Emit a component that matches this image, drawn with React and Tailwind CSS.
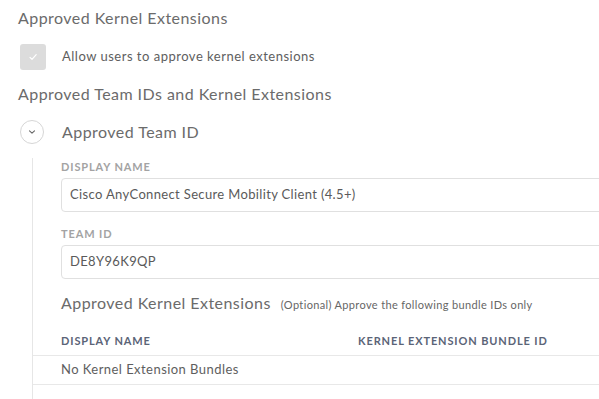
import React from 'react';

function Check() {
    return (
        <svg width="12" height="12" viewBox="0 0 12 12" fill="none">
            <path d="M3 6.3l2 2L9.2 3.6" stroke="#fff" strokeWidth="1.2" strokeLinecap="round" strokeLinejoin="round" />
        </svg>
    );
}

function Chevron() {
    return (
        <svg width="8" height="6" viewBox="0 0 8 6" fill="none">
            <path d="M1.5 1.8L4 4.2l2.5-2.4" stroke="#666" strokeWidth="1.1" strokeLinecap="round" strokeLinejoin="round" />
        </svg>
    );
}

function FieldLabel({ children }) {
    return (
        <div className="text-[11px] font-bold tracking-[0.08em] text-[#a3a3a3] leading-none">{children}</div>
    );
}

function TextField({ value }) {
    return (
        <div className="mt-[6px] -mr-[4px] flex h-[34px] items-center rounded-l-[4px] border border-[#e0e0e0] pl-[8px] text-[13px] tracking-[0.35px] text-[#5a5a5a]">
            {value}
        </div>
    );
}

export default function App() {
    return (
        <div
            className="h-[399px] w-[599px] overflow-hidden bg-white pl-[18px]"
            style={{ fontFamily: 'Lato, "Open Sans", sans-serif' }}
        >
            <h2 className="pt-[8px] text-[16px] leading-[20px] tracking-[0.45px] text-[#6b6b6b]">Approved Kernel Extensions</h2>

            <div className="mt-[16px] flex items-center">
                <div className="ml-[2px] flex h-[26px] w-[26px] items-center justify-center rounded-[3px] bg-[#dcdcdc]">
                    <Check />
                </div>
                <span className="ml-[16px] text-[13px] tracking-[0.5px] text-[#5e5e5e]">Allow users to approve kernel extensions</span>
            </div>

            <h2 className="mt-[14px] text-[16px] leading-[20px] tracking-[0.45px] text-[#6b6b6b]">Approved Team IDs and Kernel Extensions</h2>

            <div className="mt-[16px] flex items-center">
                <div className="ml-[2px] flex h-[24px] w-[24px] items-center justify-center rounded-full border border-[#d6d6d6] bg-white">
                    <Chevron />
                </div>
                <span className="ml-[18px] text-[16px] tracking-[0.45px] text-[#6b6b6b]">Approved Team ID</span>
            </div>

            <div className="ml-[14px] mt-[14px] border-l border-[#e6e6e6] pl-[28px] pb-[20px]">
                <div className="pt-[3px]">
                    <FieldLabel>DISPLAY NAME</FieldLabel>
                    <TextField value="Cisco AnyConnect Secure Mobility Client (4.5+)" />
                </div>
                <div className="mt-[16px]">
                    <FieldLabel>TEAM ID</FieldLabel>
                    <TextField value="DE8Y96K9QP" />
                </div>

                <div className="mt-[12px] flex items-baseline">
                    <span className="text-[16px] tracking-[0.45px] text-[#6b6b6b]">Approved Kernel Extensions</span>
                    <span className="ml-[10px] text-[11px] tracking-[0.35px] text-[#666]">(Optional) Approve the following bundle IDs only</span>
                </div>

                <div className="-ml-[28px] mt-[18px]">
                    <div className="flex border-b border-[#e8e8e8] pb-[5px] pl-[28px] text-[11px] font-bold tracking-[0.08em] text-[#5b6477]">
                        <div className="w-[297px]">DISPLAY NAME</div>
                        <div>KERNEL EXTENSION BUNDLE ID</div>
                    </div>
                    <div className="flex h-[29px] items-center border-b border-[#e8e8e8] pl-[28px] text-[13px] tracking-[0.45px] text-[#5e5e5e]">
                        No Kernel Extension Bundles
                    </div>
                </div>
            </div>
        </div>
    );
}
